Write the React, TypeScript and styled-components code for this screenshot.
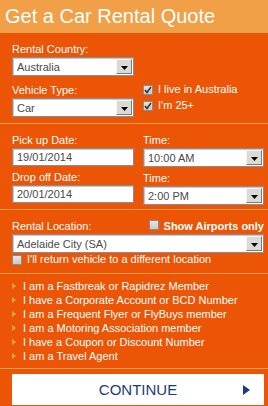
import React from 'react'
import styled, { createGlobalStyle } from 'styled-components'

const GlobalStyle = createGlobalStyle`
  html, body {
    margin: 0;
    padding: 0;
    background: #eb5505;
  }
  body {
    font-family: "Liberation Sans", Arial, sans-serif;
  }
`

const extras = [
  'I am a Fastbreak or Rapidrez Member',
  'I have a Corporate Account or BCD Number',
  'I am a Frequent Flyer or FlyBuys member',
  'I am a Motoring Association member',
  'I have a Coupon or Discount Number',
  'I am a Travel Agent',
]

const Check = ({ checked, raise }: { checked?: boolean; raise?: number }) => (
  <Box $raise={raise}>
    {checked && (
      <svg width="8" height="8" viewBox="0 0 8 8">
        <path d="M1 4 L3 6.5 L7 1" fill="none" stroke="#333" strokeWidth="1.6" />
      </svg>
    )}
  </Box>
)

const Select = ({ value }: { value: string }) => (
  <Field as="div" $h={19}>
    <span>{value}</span>
    <ArrowBtn>
      <svg width="7" height="4" viewBox="0 0 7 4">
        <path d="M0 0 H7 L3.5 4 Z" fill="#000" />
      </svg>
    </ArrowBtn>
  </Field>
)

const App = () => {
  return (
    <Panel>
      <GlobalStyle />
      <Header>Get a Car Rental Quote</Header>

      <Section $pt={10} $pb={6}>
        <TwoCol>
          <Cell>
            <Label>Rental Country:</Label>
            <Select value="Australia" />
          </Cell>
          <div />
          <Cell $mt={8}>
            <Label>Vehicle Type:</Label>
            <Select value="Car" />
          </Cell>
          <Options>
            <Option>
              <Check checked />
              I live in Australia
            </Option>
            <Option>
              <Check checked />
              I'm 25+
            </Option>
          </Options>
        </TwoCol>
      </Section>

      <Section $pt={10} $pb={4}>
        <TwoCol>
          <Cell>
            <Label>Pick up Date:</Label>
            <Field $h={18}>19/01/2014</Field>
          </Cell>
          <Cell>
            <Label>Time:</Label>
            <Select value="10:00 AM" />
          </Cell>
          <Cell $mt={4}>
            <Label>Drop off Date:</Label>
            <Field $h={18}>20/01/2014</Field>
          </Cell>
          <Cell $mt={5}>
            <Label>Time:</Label>
            <Select value="2:00 PM" />
          </Cell>
        </TwoCol>
      </Section>

      <Section $pt={10} $pb={7}>
        <LocationHead>
          <Label>Rental Location:</Label>
          <Option $bold>
            <Check raise={2} />
            Show Airports only
          </Option>
        </LocationHead>
        <Select value="Adelaide City (SA)" />
        <Option>
          <Check />
          I'll return vehicle to a different location
        </Option>
      </Section>

      <Section $pt={5} $pb={5}>
        <List>
          {extras.map((t) => (
            <Item key={t}>{t}</Item>
          ))}
        </List>
      </Section>

      <Footer>
        <Continue>
          CONTINUE
          <Play viewBox="0 0 7 10" width="7" height="10">
            <path d="M0 0 L7 5 L0 10 Z" fill="#1b3c7a" />
          </Play>
        </Continue>
      </Footer>
    </Panel>
  )
}

export default App

const Panel = styled.div`
  width: 268px;
  height: 406px;
  background: #eb5505;
  color: #fff;
  overflow: hidden;
`

const Header = styled.div`
  height: 33px;
  line-height: 33px;
  padding-left: 5px;
  background: #f2a048;
  font-size: 20px;
  color: #fff;
  white-space: nowrap;
`

const Section = styled.div<{ $pt: number; $pb: number }>`
  padding: ${(p) => p.$pt}px 4px ${(p) => p.$pb}px 12px;
  border-bottom: 1px solid #f7a24a;
`

const TwoCol = styled.div`
  display: grid;
  grid-template-columns: 122px 121px;
  column-gap: 9px;
  align-items: start;
`

const Cell = styled.div<{ $mt?: number }>`
  display: flex;
  flex-direction: column;
  gap: 1px;
  margin-top: ${(p) => p.$mt || 0}px;
`

const Label = styled.div`
  font-size: 11px;
  line-height: 13px;
  color: #fff;
  white-space: nowrap;
`

const Field = styled.div<{ $h: number }>`
  box-sizing: border-box;
  height: ${(p) => p.$h}px;
  display: flex;
  align-items: center;
  justify-content: space-between;
  padding-left: 4px;
  padding-right: 1px;
  background: #fff;
  border: 1px solid #8d8d8d;
  box-shadow: inset 1px 1px 0 #c8c8c8;
  font-size: 11px;
  color: #4a4a4a;
  white-space: nowrap;
`

const ArrowBtn = styled.span`
  box-sizing: border-box;
  width: 16px;
  height: 15px;
  display: flex;
  align-items: center;
  justify-content: center;
  padding-top: 2px;
  background: #dcdad5;
  border: 1px solid;
  border-color: #f4f4f4 #7a7a7a #7a7a7a #f4f4f4;
`

const Options = styled.div`
  display: flex;
  flex-direction: column;
  gap: 3px;
  margin-top: 7px;
`

const Option = styled.div<{ $bold?: boolean }>`
  display: flex;
  align-items: center;
  gap: 5px;
  font-size: 11px;
  line-height: 13px;
  font-weight: ${(p) => (p.$bold ? 700 : 400)};
  white-space: nowrap;
`

const Box = styled.span<{ $raise?: number }>`
  box-sizing: border-box;
  width: 10px;
  height: 10px;
  display: inline-flex;
  align-items: center;
  justify-content: center;
  margin-top: ${(p) => -(p.$raise || 0) * 2}px;
  background: linear-gradient(#e6e6e6, #c9c9c9);
  border: 1px solid #8a8a8a;
  flex-shrink: 0;
`

const LocationHead = styled.div`
  display: flex;
  justify-content: space-between;
  align-items: center;
  margin-bottom: 1px;
`

const List = styled.ul`
  list-style: none;
  margin: 0;
  padding: 0;
`

const Item = styled.li`
  position: relative;
  padding-left: 11px;
  font-size: 11px;
  line-height: 14px;
  white-space: nowrap;

  &::before {
    content: '';
    position: absolute;
    left: 0;
    top: 4px;
    border-left: 4px solid #f7a24a;
    border-top: 3px solid transparent;
    border-bottom: 3px solid transparent;
  }
`

const Footer = styled.div`
  padding: 5px 4px 0 12px;
`

const Continue = styled.button`
  position: relative;
  box-sizing: border-box;
  width: 252px;
  height: 31px;
  display: flex;
  align-items: center;
  justify-content: center;
  border: none;
  background: #fff;
  font-family: "Liberation Sans", Arial, sans-serif;
  font-size: 15px;
  color: #1b3c7a;
  padding: 0;
`

const Play = styled.svg`
  position: absolute;
  right: 14px;
  top: 11px;
`
